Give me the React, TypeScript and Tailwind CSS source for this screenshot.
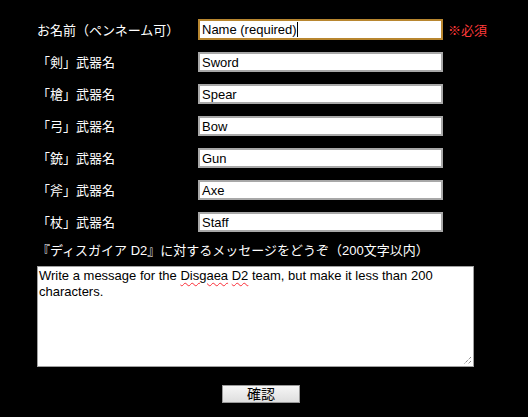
import React from "react";

const rows = [
  { label: "「剣」武器名", value: "Sword" },
  { label: "「槍」武器名", value: "Spear" },
  { label: "「弓」武器名", value: "Bow" },
  { label: "「銃」武器名", value: "Gun" },
  { label: "「斧」武器名", value: "Axe" },
  { label: "「杖」武器名", value: "Staff" },
];

const font = { fontFamily: '"Liberation Sans", "Noto Sans CJK JP", sans-serif' };

export default function App() {
  return (
    <div className="min-h-[417px] w-full bg-black text-white text-[13px] pt-[20px] pl-[37px]" style={font}>
      <div className="flex flex-col gap-[12px]">
        <div className="flex items-center h-[20px]">
          <div className="w-[161px] leading-none">お名前（ペンネーム可）</div>
          <div className="w-[245px] h-[21px] -mt-[1px] border-2 border-[#b8862f] bg-white text-black flex items-center pl-[2px] leading-none">
            <span>Name (required)</span>
            <span className="inline-block w-px h-[15px] bg-black" />
          </div>
          <span className="ml-[5px] text-[#ff3a3a] leading-none">※必須</span>
        </div>
        {rows.map((r) => (
          <div key={r.value} className="flex items-center h-[20px]">
            <div className="w-[161px] leading-none">{r.label}</div>
            <div className="w-[245px] h-[20px] border-2 border-[#a8a8a8] bg-white text-black flex items-center pl-[2px] leading-none">
              {r.value}
            </div>
          </div>
        ))}
      </div>
      <div className="mt-[8px] h-[20px] flex items-center leading-none">
        『ディスガイア D2』に対するメッセージをどうぞ（200文字以内）
      </div>
      <div className="relative mt-[6px] w-[437px] h-[101px] border border-[#a0a0a0] bg-white text-black px-[1px] pt-[1px] leading-[16px]">
        Write a message for the{" "}
        <span className="underline decoration-wavy decoration-red-500 decoration-1 underline-offset-2">Disgaea</span>{" "}
        <span className="underline decoration-wavy decoration-red-500 decoration-1 underline-offset-2">D2</span> team, but make it less than 200 characters.
        <svg className="absolute right-[1px] bottom-[1px]" width="10" height="10" viewBox="0 0 10 10">
          <line x1="9" y1="2" x2="2" y2="9" stroke="#555" strokeWidth="1" strokeDasharray="1 1" />
          <line x1="9" y1="6" x2="6" y2="9" stroke="#555" strokeWidth="1" strokeDasharray="1 1" />
        </svg>
      </div>
      <div className="mt-[18px] pl-[185px] pb-[14px]">
        <div className="w-[78px] h-[18px] border border-[#9a9a9a] bg-gradient-to-b from-[#f6f6f6] to-[#dedede] text-black flex items-center justify-center leading-none text-[14px]">
          確認
        </div>
      </div>
    </div>
  );
}
